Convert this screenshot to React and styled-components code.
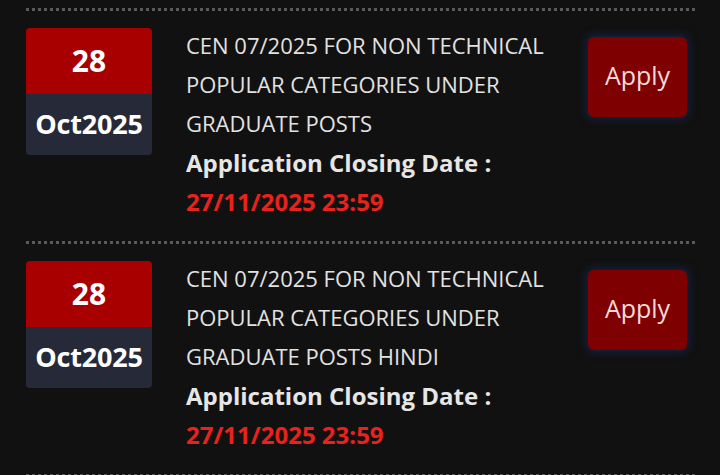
import React from "react";
import styled, { createGlobalStyle } from "styled-components";

const GlobalStyle = createGlobalStyle`
  html, body {
    margin: 0;
    padding: 0;
    background: #111111;
  }
  body {
    font-family: "Open Sans", "Noto Sans", sans-serif;
  }
`;

// whole list
const List = styled.div`
  padding: 8px 25px 0 26px;
`;

// dotted line between items
const Divider = styled.div`
  height: 3px;
  background-image: repeating-linear-gradient(
    to right,
    #5a5a5a 0 3px,
    transparent 3px 6px
  );
`;

const Row = styled.div`
  display: flex;
  align-items: flex-start;
  padding: 17px 8px 20px 0;
`;

// date card
const DateCard = styled.div`
  width: 126px;
  flex-shrink: 0;
  border-radius: 4px;
  overflow: hidden;
  margin-right: 34px;
  color: #ffffff;
  font-weight: 700;
  text-align: center;
`;

const Day = styled.div`
  height: 66px;
  line-height: 66px;
  background: #a80000;
  font-size: 30px;
`;

const Month = styled.div`
  height: 61px;
  line-height: 60px;
  background: #262a38;
  font-size: 27px;
  letter-spacing: -0.2px;
`;

const Body = styled.div`
  flex: 1;
  margin-top: -2px;
  font-size: 22px;
  line-height: 39px;
  color: #e2e2e2;
`;

const Title = styled.div`
  text-transform: uppercase;
  white-space: nowrap;
`;

const Closing = styled.div`
  font-weight: 700;
  font-size: 24px;
  white-space: nowrap;
  color: ${(p) => (p.red ? "#e8221c" : "#e6e6e6")};
`;

const ApplyButton = styled.button`
  width: 99px;
  height: 80px;
  flex-shrink: 0;
  margin-top: 9px;
  padding: 0 0 4px;
  border: none;
  border-radius: 6px;
  background: #7f0000;
  color: #f6dada;
  font-family: "Open Sans", sans-serif;
  font-size: 25px;
  box-shadow: 0 0 8px 2px rgba(30, 50, 110, 0.55);
  cursor: pointer;
`;

const items = [
  {
    id: 1,
    day: "28",
    month: "Oct2025",
    title: ["CEN 07/2025 FOR NON TECHNICAL", "POPULAR CATEGORIES UNDER", "GRADUATE POSTS"],
    closing: "27/11/2025 23:59",
  },
  {
    id: 2,
    day: "28",
    month: "Oct2025",
    title: ["CEN 07/2025 FOR NON TECHNICAL", "POPULAR CATEGORIES UNDER", "GRADUATE POSTS HINDI"],
    closing: "27/11/2025 23:59",
  },
];

const App = () => {
  return (
    <>
      <GlobalStyle />
      <List>
        {items.map((item) => (
          <React.Fragment key={item.id}>
            <Divider />
            <Row>
              <DateCard>
                <Day>{item.day}</Day>
                <Month>{item.month}</Month>
              </DateCard>
              <Body>
                {item.title.map((line) => (
                  <Title key={line}>{line}</Title>
                ))}
                <Closing>Application Closing Date :</Closing>
                <Closing red>{item.closing}</Closing>
              </Body>
              <ApplyButton>Apply</ApplyButton>
            </Row>
          </React.Fragment>
        ))}
        <Divider />
      </List>
    </>
  );
};

export default App;
